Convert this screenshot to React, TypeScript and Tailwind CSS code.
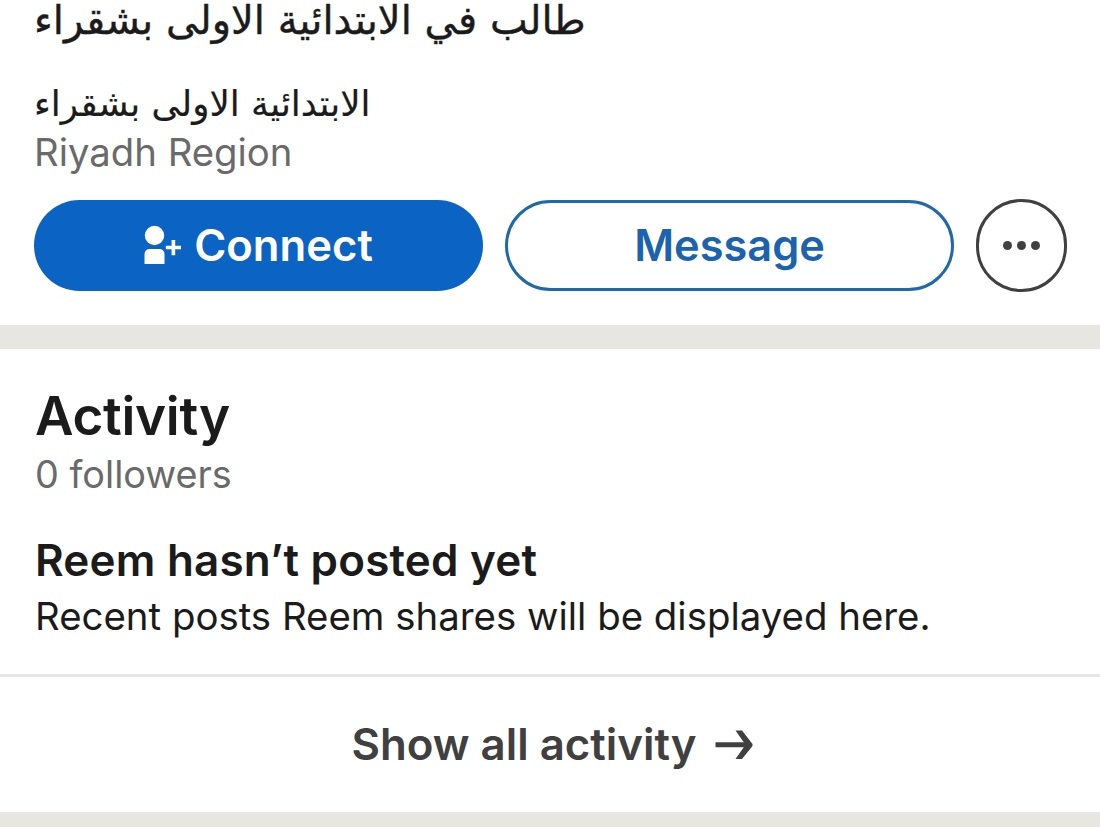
import React from 'react';

const ConnectIcon = () => (
  <svg width="40" height="42" viewBox="0 0 40 42" fill="currentColor">
    <circle cx="10.5" cy="10.5" r="9.7" />
    <path d="M0.5 39V29.5q0-5.500 5.500-5.500h9q5.500 0 5.500 5.500v9.500z" />
    <path d="M27.600 15h3.600v5.800h5.800v3.500h-5.800v5.900h-3.600v-5.900h-5.800v-3.500h5.800z" />
  </svg>
);

const ArrowIcon = () => (
  <svg width="40" height="34" viewBox="0 0 40 34" fill="currentColor">
    <path d="M1.500 14.300h32v4.900h-32z" />
    <path d="M21.500 2.500h6.500L38.500 16v2L28 31h-6.500l10-14.200z" />
  </svg>
);

const Dot = () => <span className="size-[9px] rounded-full bg-[#404040]" />;

export default function App() {
  return (
    <div className="w-[1100px] h-[827px] overflow-hidden bg-white font-['Inter','Noto_Sans',sans-serif] text-[#1b1b1b]">
      <section className="h-[325px] px-[34px]">
        <div dir="rtl" className="w-fit h-[44px] whitespace-nowrap font-['DejaVu_Sans',sans-serif] text-[40.1px] leading-[40px] [-webkit-text-stroke:0.4px_#1b1b1b]">
          طالب في الابتدائية الاولى بشقراء
        </div>
        <div dir="rtl" className="w-fit mt-[38px] h-[48px] whitespace-nowrap font-['DejaVu_Sans',sans-serif] text-[35.7px] leading-[44px] [-webkit-text-stroke:0.2px_#1b1b1b]">
          الابتدائية الاولى بشقراء
        </div>
        <div className="h-[46px] text-[38.3px] leading-[45px] text-[#6a6a6a]">Riyadh Region</div>
        <div className="mt-[23px] flex items-center">
          <button className="flex h-[91px] w-[449px] shrink-0 items-center justify-center rounded-full bg-[#0b64c3] text-[43.6px] font-semibold text-white">
            <ConnectIcon />
            <span className="ml-[10px]">Connect</span>
          </button>
          <button className="ml-[22px] h-[91px] w-[449px] shrink-0 rounded-full border-[3px] border-[#1f68ac] text-[43.3px] font-semibold text-[#1b63ae]">
            Message
          </button>
          <button className="ml-[22px] flex h-[93px] w-[91px] shrink-0 items-center justify-center gap-[5px] rounded-full border-[3px] border-[#404040]">
            <Dot />
            <Dot />
            <Dot />
          </button>
        </div>
      </section>
      <div className="h-6 bg-[#e7e6e0]" />
      <section className="h-[325px] px-[35px] pt-[34px]">
        <h2 className="text-[53px] leading-[67px] font-semibold tracking-[-0.3px]">Activity</h2>
        <p className="text-[37.8px] leading-[48px] text-[#6a6a6a]">0 followers</p>
        <h3 className="mt-[36px] text-[44px] leading-[52px] font-semibold tracking-[0.2px]">Reem hasn’t posted yet</h3>
        <p className="whitespace-nowrap text-[38.4px] leading-[61px]">Recent posts Reem shares will be displayed here.</p>
      </section>
      <div className="h-[3px] bg-[#e6e6e6]" />
      <button className="flex h-[135px] w-full items-center justify-center pl-[5px] text-[43.8px] font-semibold text-[#404040]">
        <span>Show all activity</span>
        <span className="ml-[17px]"><ArrowIcon /></span>
      </button>
      <div className="h-[15px] bg-[#e7e6e0]" />
    </div>
  );
}
